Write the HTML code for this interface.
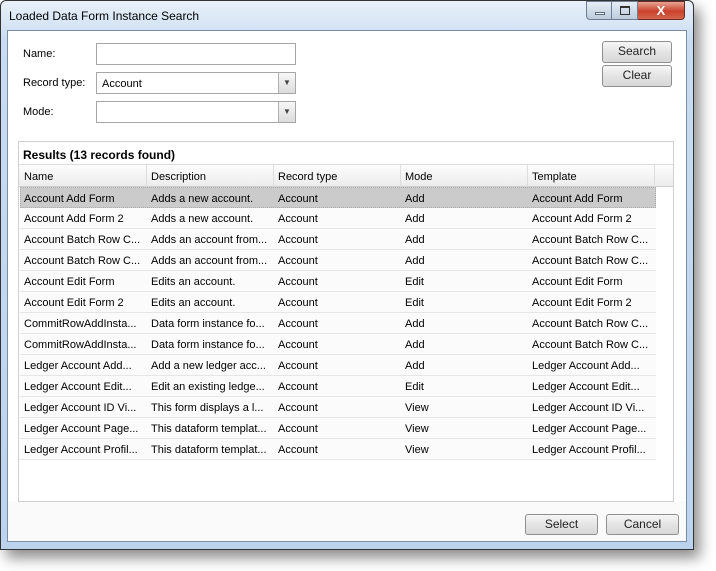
<!DOCTYPE html>
<html><head><style>
*{box-sizing:border-box;margin:0;padding:0}
body{width:716px;height:571px;background:#fff;position:relative;overflow:hidden;font-family:"Liberation Sans",Arial,sans-serif;font-size:11px;color:#000}
.a{position:absolute}
.win{left:0;top:0;width:694px;height:550px;background:linear-gradient(#e9f1fa,#c9dcf1 40px,#bcd3ee);border:1px solid #333;border-radius:6px 6px 0 0;box-shadow:6px 8px 14px rgba(0,0,0,.45)}
.inner{left:7px;top:30px;width:680px;height:512px;background:#fff;border:1px solid #7a8ea6}
.lbl{font-size:11px}
.inp{background:#fff;border:1px solid #a6a6a6;height:22px}
.dd{position:absolute;right:0;top:0;width:17px;height:20px;background:linear-gradient(#f7f7f7,#dcdcdc);border-left:1px solid #b0b0b0;font-size:8px;text-align:center;line-height:20px;color:#444}
.btn{border:1px solid #8f8f8f;border-radius:3px;background:linear-gradient(#f6f6f6,#e4e4e4 50%,#d8d8d8);text-align:center;font-size:12px;line-height:19px;color:#222}
.row{position:absolute;left:1px;width:636px;height:21px;border-bottom:1px solid #e6e6e6;background:#fbfbfb}
.row span,.hdr span{position:absolute;top:1px;line-height:21px;white-space:nowrap}
.hdr span{top:2px}
</style></head><body>
<div class="a win"></div>
<div class="a" style="left:9px;top:9px;font-size:12px">Loaded Data Form Instance Search</div>
<div class="a" style="left:586px;top:1px;width:26px;height:19px;border:1px solid #6d7f95;border-radius:0 0 0 4px;background:linear-gradient(#e6edf6,#bccbdc)"><div class="a" style="left:8px;top:10px;width:10px;height:3px;border:1px solid #5a6b80;background:#fff"></div></div>
<div class="a" style="left:612px;top:1px;width:26px;height:19px;border:1px solid #6d7f95;border-left:none;background:linear-gradient(#e6edf6,#bccbdc)"><div class="a" style="left:8px;top:4px;width:10px;height:9px;border:1px solid #333;border-top-width:2px"></div></div>
<div class="a" style="left:638px;top:1px;width:47px;height:19px;border:1px solid #6d2a22;border-left:none;border-radius:0 0 4px 0;background:linear-gradient(#e8a493,#c9412b 55%,#d3664d);color:#fff;font-weight:bold;font-size:13px;text-align:center;line-height:17px">X</div>
<div class="a inner"></div>
<div class="a" style="left:8px;top:501px;width:678px;height:40px;background:#fafafa"></div>
<div class="a lbl" style="left:23px;top:48px">Name:</div>
<div class="a inp" style="left:96px;top:43px;width:200px"></div>
<div class="a lbl" style="left:23px;top:77px">Record type:</div>
<div class="a inp" style="left:96px;top:72px;width:200px"><span class="a" style="left:5px;top:5px">Account</span><div class="dd">&#9660;</div></div>
<div class="a lbl" style="left:23px;top:106px">Mode:</div>
<div class="a inp" style="left:96px;top:101px;width:200px"><div class="dd">&#9660;</div></div>
<div class="a btn" style="left:602px;top:41px;width:70px;height:22px">Search</div>
<div class="a btn" style="left:602px;top:65px;width:70px;height:22px">Clear</div>
<div class="a" style="left:18px;top:141px;width:656px;height:361px;border:1px solid #cfcfcf;background:#fff">
<div class="a" style="left:4px;top:6px;font-size:12px;font-weight:bold">Results (13 records found)</div>
<div class="a hdr" style="left:0;top:22px;width:654px;height:23px;background:linear-gradient(#fdfdfd,#ececec);border-top:1px solid #ddd;border-bottom:1px solid #d0d0d0">
<span style="left:5px">Name</span><span style="left:132px">Description</span><span style="left:259px">Record type</span><span style="left:386px">Mode</span><span style="left:513px">Template</span>
<div class="a" style="left:127px;top:0;width:1px;height:22px;background:#ddd"></div>
<div class="a" style="left:254px;top:0;width:1px;height:22px;background:#ddd"></div>
<div class="a" style="left:381px;top:0;width:1px;height:22px;background:#ddd"></div>
<div class="a" style="left:508px;top:0;width:1px;height:22px;background:#ddd"></div>
<div class="a" style="left:635px;top:0;width:1px;height:22px;background:#ddd"></div>
</div>
<div id="rows"></div>
</div>
<div class="a btn" style="left:525px;top:514px;width:73px;height:21px">Select</div>
<div class="a btn" style="left:606px;top:514px;width:73px;height:21px">Cancel</div>
<script>
var d=[["Account Add Form","Adds a new account.","Add","Account Add Form"],["Account Add Form 2","Adds a new account.","Add","Account Add Form 2"],["Account Batch Row C...","Adds an account from...","Add","Account Batch Row C..."],["Account Batch Row C...","Adds an account from...","Add","Account Batch Row C..."],["Account Edit Form","Edits an account.","Edit","Account Edit Form"],["Account Edit Form 2","Edits an account.","Edit","Account Edit Form 2"],["CommitRowAddInsta...","Data form instance fo...","Add","Account Batch Row C..."],["CommitRowAddInsta...","Data form instance fo...","Add","Account Batch Row C..."],["Ledger Account Add...","Add a new ledger acc...","Add","Ledger Account Add..."],["Ledger Account Edit...","Edit an existing ledge...","Edit","Ledger Account Edit..."],["Ledger Account ID Vi...","This form displays a l...","View","Ledger Account ID Vi..."],["Ledger Account Page...","This dataform templat...","View","Ledger Account Page..."],["Ledger Account Profil...","This dataform templat...","View","Ledger Account Profil..."]];
var h="";d.forEach(function(r,i){h+='<div class="row" style="top:'+(45+i*21)+'px;'+(i==0?'background:#cbcbcb;border:1px dotted #aaa;':'')+'"><span style="left:'+(i==0?3:4)+'px">'+r[0]+'</span><span style="left:'+(i==0?130:131)+'px">'+r[1]+'</span><span style="left:'+(i==0?257:258)+'px">Account</span><span style="left:'+(i==0?384:385)+'px">'+r[2]+'</span><span style="left:'+(i==0?511:512)+'px">'+r[3]+'</span></div>'});
document.getElementById("rows").innerHTML=h;
</script>
</body></html>
